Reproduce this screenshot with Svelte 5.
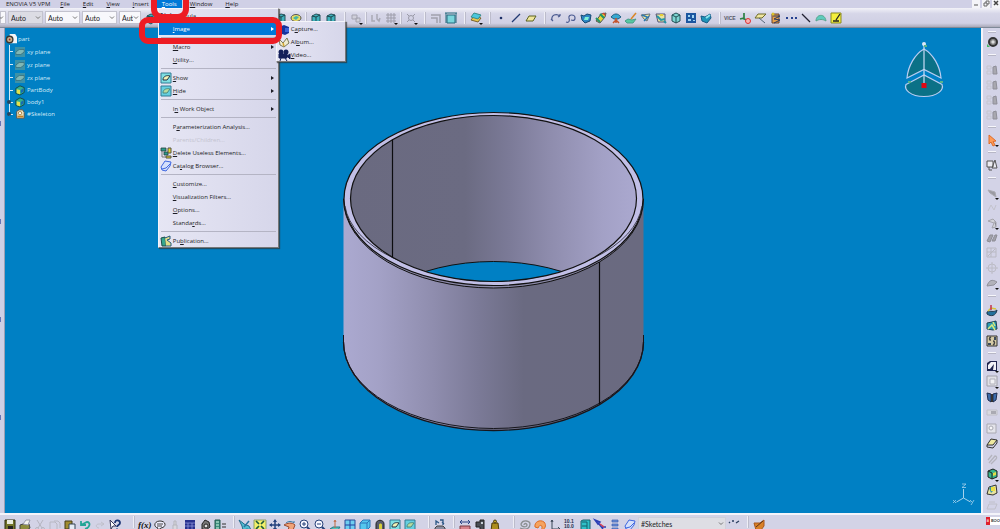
<script>
  const glyphs = {
    cube: '<path d="M2 4l4-2 4 1v6l-4 3-4-2z" fill="#3fb3bd" stroke="#24505a"/><path d="M2 4l4 1 4-2M6 5v6" fill="none" stroke="#1c444c"/>',
    cubeGreen: '<path d="M1 4l5-3 5 2v6l-5 3-5-2z" fill="#35b08c" stroke="#143c3c"/><path d="M2 5l4 1v5l-4-1z" fill="#e5e04c"/><path d="M7 6l3-2v4l-3 2z" fill="#1769b5"/>',
    disc: '<ellipse cx="6" cy="6" rx="5" ry="3.5" fill="#e8dc62" stroke="#555"/><path d="M3 6l3-2 3 1-3 3z" fill="#42b5a8"/>',
    surf: '<path d="M1 4l6-3 4 2-2 7-7 1z" fill="#39b6cf" stroke="#175a8c"/><path d="M2 8l4-4 4 1" fill="none" stroke="#e3ec4e" stroke-width="1.5"/>',
    surf2: '<path d="M1 3l3 1 3-2 4 1-1 6-5 2-3-3z" fill="#2c86c4" stroke="#174a73"/><path d="M4 8l1-3 4 0-1 3z" fill="#7ff0d5"/>',
    sweep: '<path d="M1 9l5-7 5-1-1 4-5 6z" fill="#e6d63a" stroke="#555"/><path d="M1 6l4 4M5 2l4 4" stroke="#22936b" stroke-width="2"/><path d="M8 1l2 2" stroke="#d8452c" stroke-width="1.5"/>',
    fan: '<path d="M1 5c3-4 7-4 10 0L8 7H4z" fill="#38a9d0" stroke="#1f5f83"/><path d="M6 6v5M3 11l3-3 3 3" fill="none" stroke="#c5542c" stroke-width="1.5"/>',
    extrude: '<path d="M0 9l3-2 4 1 4-1-3 4H2z" fill="#57c9a2" stroke="#4a9d8b"/><path d="M6 7l5-6" stroke="#d98728" stroke-width="1.5"/>',
    trim: '<path d="M1 3l9-1-3 7-3-2z" fill="#f1e79e" stroke="#66747f"/><path d="M2 3l5 2M4 9l5-5" stroke="#2c79b0" stroke-width="1.5"/>',
    trim2: '<path d="M1 2h9v8H3z" fill="#e8e3a0" stroke="#557"/><path d="M2 4l4 4 4-1M9 9l2 2" fill="none" stroke="#2695a6" stroke-width="2"/><path d="M5 2h3v2H5z" fill="#e5cc38"/>',
    box: '<path d="M2 3l4-2 4 2v6l-4 2-4-2z" fill="#7cd5d2" stroke="#234f55"/><path d="M2 3l4 2 4-2M6 5v6" fill="none" stroke="#234f55"/>',
    tiles: '<path d="M1 1h10v10H1z" fill="#1c56a0"/><path d="M3 3h2v2H3zM7 3h2v3H7zM3 7h3v2H3zM8 8h2v1H8z" fill="#9fd3f3"/>',
    solid: '<path d="M1 4l4 1 5-3 1 4-4 5-5-2z" fill="#1f94b8" stroke="#155a86"/><path d="M6 6l4-3" stroke="#8ee5ee" stroke-width="2"/>',
    layers: '<path d="M1 8l7 2 3-4-7-2z" fill="#e8c84e" stroke="#7a6330"/><path d="M1 5l7 2 3-4-7-2z" fill="#4ac7dd" stroke="#3a8c8a"/>',
    dot: '<circle cx="6" cy="6" r="1.3" fill="#1d2f66"/>',
    line: '<path d="M2 10l8-8" stroke="#223a73" stroke-width="1.3"/>',
    back: '<path d="M2 2l8 8" stroke="#223" stroke-width="1.3"/>',
    plane: '<path d="M1 9l3-5h7L8 9z" fill="#efe59a" stroke="#5b6220"/>',
    curve: '<path d="M1 7l2 2M2 8c-1-5 4-7 8-4M10 4l-2 1M10 4V2" fill="none" stroke="#4a5a90" stroke-width="1.2"/>',
    spiral: '<path d="M1 10c3 1 4-1 3-4-1-4 6-4 6 0 0 2-1 3-4 2" fill="none" stroke="#4a5a90" stroke-width="1.2"/>',
    gbox: '<path d="M2 3h5v4H2zM6 6h4v4H6z" fill="#cfcfda" stroke="#a3a3b0"/>',
    gswap: '<path d="M2 3v6h3M7 2v5l2 2 1-3" fill="none" stroke="#a9a9b5" stroke-width="1.5"/>',
    grid: '<path d="M3 1v10M6 1v10M9 1v10M1 3h10M1 6h10M1 9h10" stroke="#9d9daa"/>',
    gstar: '<circle cx="6" cy="6" r="2.5" fill="none" stroke="#9a9aa8"/><path d="M2 2l2 2M10 2L8 4M2 10l2-2M10 10L8 8" stroke="#9a9aa8"/>',
    gcorner: '<path d="M1 3h9v8M1 6h6v5" fill="none" stroke="#a1a1ad" stroke-width="1.5"/>',
    frame: '<path d="M0 1h12M1 1v10M11 1v10" fill="none" stroke="#24697d"/><path d="M2 3h8v8H2z" fill="#79d5dc" stroke="#24697d"/>',
    axisNo: '<path d="M4 1v6l6 2M4 6l-4 1" fill="none" stroke="#2d8144" stroke-width="1.7"/><circle cx="8" cy="9" r="2.5" fill="#f7b3b3" stroke="#d33"/>',
    sheet: '<path d="M0 6l3-4h8L7 6z" fill="#f0e6a0" stroke="#6c6a2b"/><path d="M4 6l6 5" stroke="#567"/>',
    clip: '<path d="M2 2h7v9H2z" fill="#e6a24a" stroke="#643"/><path d="M3 4l7 0-6 3 6 1-6 3" fill="none" stroke="#2b3a62"/><circle cx="3" cy="2" r="1.5" fill="#d9c32e"/>',
    dots: '<path d="M1 5h2v2H1zM6 5h2v2H6zM10 5h2v2h-2z" fill="#24408f"/>',
    arc: '<path d="M1 9c0-7 9-8 10 0-3-2-7-2-10 0z" fill="#5ecbbd" stroke="#59a58f"/>',
    note: '<path d="M1 1h10v10H1z" fill="#f4ee3c" stroke="#8a8a22"/><path d="M3 9h6M6 8l4-6" stroke="#222" stroke-width="1.3"/>',
    save: '<path d="M1 1h10v10H1z" fill="#73752a" stroke="#2c2d10"/><path d="M3 1h6v4H3z" fill="#e9ecdf"/><path d="M4 7h5v4H4z" fill="#222"/>',
    print: '<path d="M1 6l3-1h6l1 4-3 2H1z" fill="#8d8c3d" stroke="#444"/><path d="M4 5l3-4h4L9 6z" fill="#f4f4f0" stroke="#99a"/>',
    cut: '<path d="M3 1l5 8M9 1L4 9" stroke="#b5b5c0"/><circle cx="3" cy="10" r="1.5" fill="none" stroke="#b5b5c0"/><circle cx="9" cy="10" r="1.5" fill="none" stroke="#b5b5c0"/>',
    gcopy: '<path d="M1 3h5l2 2v6H1zM5 2h4l2 2v5" fill="none" stroke="#b8b8c2"/>',
    paste: '<path d="M1 2h7v8H1z" fill="#a08c2f" stroke="#443d17"/><path d="M5 5h6v6H5z" fill="#e5ecf5" stroke="#345"/>',
    undo: '<path d="M2 6l6-3c4 0 3 6-2 7M2 2v4h5" fill="none" stroke="#23a596" stroke-width="1.8"/>',
    gredo: '<path d="M10 5H5C1 5 2 9 5 9M7 3l3 2-3 2" fill="none" stroke="#c0c0cb"/>',
    help: '<path d="M1 1l1 9 2-3h3z" fill="#fff" stroke="#335"/><path d="M6 4c0-4 5-3 5 0 0 2-3 2-3 4M8 9.5v2" fill="none" stroke="#1b3475" stroke-width="1.8"/>',
    fx: '<text x="-1" y="9" font-family="Liberation Serif, serif" font-size="9" font-style="italic" font-weight="700" fill="#111">f(x)</text>',
    bubble: '<path d="M4 9L3 12l4-3c6-1 5-7-1-7S-1 8 4 9z" fill="#eef" stroke="#333"/><path d="M3 5h6M3 7h5" stroke="#444"/>',
    glock: '<path d="M4 6h4v5H4zM5 6V2h2v4" fill="#d8d8df" stroke="#b5b5bd"/>',
    table: '<path d="M1 1h10v10H1z" fill="#27318e"/><path d="M1 4h10M1 7h10M4 4v7M8 4v7" stroke="#98a2e2" stroke-width=".7"/>',
    ring: '<path d="M3 5l3-4 4 2 1 5-4 3-4-1z" fill="#777" stroke="#222"/><circle cx="7" cy="7" r="2" fill="#ddd" stroke="#222"/>',
    tree: '<path d="M1 1h5v10H1z" fill="#3d9080" stroke="#25594f"/><path d="M2 3h3M2 6h3M2 9h3" stroke="#d2f5e1"/><path d="M8 5h4M8 8h4" stroke="#333"/>',
    plane3: '<path d="M0 1l4 3 1 1 5 2 2 4-4-1-4 1-1-4z" fill="#51bdd0" stroke="#256a8c"/><path d="M10 2L5 8" stroke="#2a75a0" stroke-width="1.5"/>',
    fit: '<path d="M0 1h12v10H0z" fill="#f3f06a" stroke="#8fa06c"/><path d="M2 2l3 3M10 2L7 5M2 10l3-3M10 10L7 7" stroke="#1c5a3a" stroke-width="1.7"/>',
    pan: '<path d="M6 1v10M1 6h10" stroke="#26437e" stroke-width="1.5"/><path d="M6 0l2 3H4zM6 12l2-3H4zM0 6l3-2v4zM12 6L9 4v4z" fill="#26437e"/>',
    rotate: '<path d="M0 6c3-2 8-3 11 0l-2 5H4l1-3z" fill="#f0a478" stroke="#9a4a31"/><path d="M2 4c2-2 6-2 8 0V2" stroke="#3878a5" fill="none"/>',
    zin: '<circle cx="5" cy="5" r="4" fill="#f6f6ff" stroke="#27427a"/><path d="M3 5h4M5 3v4" stroke="#27427a"/><path d="M8 8l3 3" stroke="#27427a" stroke-width="2"/>',
    zout: '<circle cx="5" cy="5" r="4" fill="#f6f6ff" stroke="#27427a"/><path d="M3 5h4" stroke="#27427a"/><path d="M8 8l3 3" stroke="#27427a" stroke-width="2"/>',
    normal: '<path d="M1 10l3-2h7l-2 3z" fill="#58c5bb" stroke="#257989"/><path d="M6 9V2M5 3l1-2 1 2" fill="none" stroke="#c26a43"/>',
    four: '<path d="M1 1h10v10H1z" fill="#6ecff0" stroke="#2a4d9a"/><path d="M6 1v10M1 6h10" stroke="#2341a0"/>',
    iso: '<path d="M1 4l3-3h7v7l-3 3H1z" fill="#54c7ee" stroke="#2b75b9"/><path d="M1 4h7v7M8 4l3-3" fill="none" stroke="#2b75b9"/>',
    arch: '<path d="M2 11V5c0-5 8-5 8 0v6z" fill="#555a6b" stroke="#222"/><path d="M5 11V6c0-2 3-2 3 0v5z" fill="#d7ce3a"/>',
    show: '<path d="M1 1h10v10H1z" fill="#7fdfe2" stroke="#337b94"/><path d="M3 8c0-4 4-5 7-4L7 8z" fill="#f3f3b5" stroke="#234"/>',
    hide: '<path d="M1 1h10v10H1z" fill="#65cfe0" stroke="#337b94"/><path d="M3 8c0-4 4-5 7-4L7 8z" fill="#b8db9f" stroke="#4a8a80"/>',
    robot: '<path d="M1 9l2-2h6l2 2v3H1z" fill="#888ca0" stroke="#444"/><path d="M2 6V2l3 2M9 6V1H6M8 3l2 2" fill="none" stroke="#2b5786" stroke-width="1.3"/>',
    measure: '<path d="M1 3h10M3 1L1 3l2 2M9 1l2 2-2 2" fill="none" stroke="#2a4384"/><path d="M1 7h10v4H1z" fill="#d7828b" stroke="#793b44"/>',
    caliper: '<path d="M2 3h4V1h4v10H6V8H2z" fill="#4a4e55" stroke="#222"/><path d="M7 3h2v2H7z" fill="#c8d0d6"/>',
    weight: '<path d="M3 4h6l1 8H2z" fill="#ad8d1d" stroke="#4c3c0a"/><circle cx="6" cy="2.5" r="1.5" fill="#c2a52a" stroke="#4c3c0a"/>',
    coil: '<path d="M1 9c8 3 10-1 10-4S4 0 2 5c0 3 6 4 6 1 0-2-3-2-3 0" fill="none" stroke="#8b8f91" stroke-width="1.3"/>',
    flame: '<path d="M1 8c-1-5 5-8 9-5 3 3 1 8-3 8 3-4-1-7-3-2z" fill="#f6a35e" stroke="#dd6b24"/>',
    axes: '<path d="M3 1v9h8M2 3l1-2 1 2M3 10L1 12M9 8l2 2-2 2" fill="none" stroke="#3a4656"/>',
    num: '<text x="0" y="4" font-family="Liberation Sans, sans-serif" font-size="5" font-weight="700" fill="#26304d">10.1</text><text x="0" y="9" font-family="Liberation Sans, sans-serif" font-size="5" font-weight="700" fill="#26304d">10.0</text>',
    column: '<path d="M2 2l2-1h7v9l-2 2H2z" fill="#2fc0c8" stroke="#17616c"/><path d="M3 3h5v8M3 7h5" fill="none" stroke="#17616c"/>',
    link: '<path d="M1 1l3 4 2-2zM5 5l4 5M8 8h4" stroke="#2c3fb5" stroke-width="1.5" fill="#4c6ae0"/><path d="M6 5l4 3" stroke="#d33b53" stroke-width="1.5"/>',
    stack: '<path d="M3 1h6v2H3zM3 5h6v2H3zM3 9h6v2H3z" fill="#6b8ed8" stroke="#3c5faf" stroke-width=".7"/>',
    book: '<path d="M1 7l4-6 6 1-1 4-4 5-4-1z" fill="#d5e0fb" stroke="#3d66e0"/><path d="M2 9l4-1 4-4" fill="none" stroke="#3d66e0"/>',
    marks: '<path d="M1 3l1 1M4 2h2M8 4l3-2" stroke="#2a3f60" stroke-width="1.3"/>',
    brush: '<path d="M1 4h6l4-3v6l-3 4H3z" fill="#d98026" stroke="#a8571d"/><path d="M3 8l7-6" stroke="#5b3215"/>',
    gear: '<circle cx="7" cy="6" r="4" fill="#8a8a8a" stroke="#333" stroke-width="2"/><path d="M5 6l2-2 2 2-2 2z" fill="#ddd"/><path d="M1 8l3 3H1z" fill="#46b966"/>',
    gview: '<path d="M1 2h4v3H1zM1 7h4v3H1z" fill="none" stroke="#c5c5ce"/><path d="M7 3l3-1 1 8H7z" fill="#a8a8b0" stroke="#8f8f99"/>',
    pointer: '<path d="M3 1l7 6-3 .5 2 3.5-2 1-2-4-2 2z" fill="#ff9a55" stroke="#dc6c2b"/>',
    sketch: '<path d="M1 2h6v6H1zM6 9l3-8 2 8z" fill="#ececf2" stroke="#555"/><path d="M3 8v3h3" fill="none" stroke="#555"/>',
    gsheet: '<path d="M2 3l7 2 1 5-6-4z" fill="#9a9aa2" stroke="#aaaab2"/>',
    gline: '<path d="M2 9l3-6 3 5 2-5" fill="none" stroke="#c3c3cc"/>',
    gbend: '<path d="M2 4l5-2 3 3v5l-4 1 2-5z" fill="#d2d2d8" stroke="#a5a5ad"/><path d="M8 4l2 2v4z" fill="#8c8c94"/>',
    gslant: '<path d="M1 9l3-6 3 0-3 7zM6 9l3-6 2 0-2 6z" fill="#a2a2aa" stroke="#8d8d96"/>',
    gmesh: '<path d="M1 1h9v9H1zM1 5h9M5 1v9M2 9l7-7" fill="none" stroke="#b9b9c3"/>',
    gtarget: '<circle cx="6" cy="6" r="4" fill="none" stroke="#bcbcc6"/><path d="M6 0v12M0 6h12" stroke="#bcbcc6"/>',
    gwave: '<path d="M1 9c2-6 5-7 10-4L8 8z" fill="#b2b2ba" stroke="#90909a"/>',
    boat: '<path d="M1 7c4-2 6 1 10-2-1 6-6 7-10 4z" fill="#21709c" stroke="#223a50"/><path d="M2 6l3-3 5 1" stroke="#d5c43c" stroke-width="1.3" fill="none"/><path d="M5 0v5" stroke="#c3334d" stroke-width="1.5"/>',
    patch: '<path d="M1 3l5-1 4-1 1 8-4 1-6-1z" fill="#2c9bb3" stroke="#1c3f53"/><path d="M2 9l4-4 3 5M7 2l2 4" fill="none" stroke="#d6ea7d" stroke-width="1.5"/>',
    pockets: '<path d="M1 1h10v10H1z" fill="#d6cba6" stroke="#333"/><path d="M5 2C3 3 3 5 5 5M7 10c2-1 2-4 0-4" fill="none" stroke="#444" stroke-width="1.5"/><path d="M8 2h2v3H8zM2 8h3v2H2z" fill="#3c4a5a"/>',
    pad: '<path d="M1 3l3-2h7v10H1z" fill="#20244e"/><path d="M2 5l3-3h5v8l-3 0 1-6-4 5H2z" fill="#f2f2f7"/>',
    gframe: '<path d="M1 1h10v10H1z" fill="#e0e0e6" stroke="#a0a0aa"/><path d="M4 4h5v5H4z" fill="#f1f1f4" stroke="#b0b0ba"/>',
    shaft: '<path d="M1 2l4 1v8l-3-2zM11 2L7 3v8l3-2z" fill="#3c6cab" stroke="#1d2d52"/><path d="M5 3h2v8H5z" fill="#333"/>',
    gbar: '<path d="M1 4h10v5H1z" fill="#d9d9e0" stroke="#bfbfc8"/><path d="M5 5h5v3H5z" fill="#aaaab3"/>',
    ground: '<path d="M1 2h9v9H1z" fill="#e3e3ea" stroke="#a9a9b2"/><circle cx="5" cy="6" r="2" fill="#f7f7f9" stroke="#a9a9b2"/>',
    slab: '<path d="M1 8l4-6 6 1-4 5z" fill="#efe9a0" stroke="#333"/><path d="M1 8v2l6 1 4-5V3" fill="none" stroke="#333"/>',
    gclip: '<path d="M3 10l6-7c2 0 2 2 1 3l-5 5M2 7l4-5" fill="none" stroke="#b4b4bd" stroke-width="1.3"/>',
    gem: '<path d="M2 3l5-2 4 2v6l-5 2-4-2z" fill="#37b58c" stroke="#222"/><path d="M2 3l4 2v6" stroke="#222" fill="none"/><path d="M7 5l3-1v3l-3 1z" fill="#e4dc45"/>',
    split: '<path d="M1 10l2-7 7-2 1 8-4 2z" fill="#e7e3a0" stroke="#333"/><path d="M3 4l3-2 3 3-4 4z" fill="#3d95a3"/><path d="M5 3h4v4H5z" fill="#ecdf42"/>',
    grow: '<path d="M1 10l2-5h8l-2 5zM3 3h6" fill="none" stroke="#c0c0ca"/>',
    capture: '<path d="M1 4l5-2 5 2v6l-4 2-6-2z" fill="#16339c"/><path d="M7 5h4v4H7z" fill="#3a62d8"/>',
    album: '<path d="M1 3l4 4 4-5 2 5-5 4-4-2z" fill="#f0edcf" stroke="#7b7a55"/><path d="M5 7l1 3" stroke="#d3a52d" stroke-width="1.5"/>',
    video: '<circle cx="3" cy="3" r="2.5" fill="#131f5a"/><circle cx="8" cy="3" r="2.5" fill="#131f5a"/><path d="M1 5h8v4H1zM9 7l3-2v5zM3 9l-1 3M7 9l2 3" fill="#131f5a" stroke="#131f5a"/>',
    useless: '<path d="M1 1h5v3H1zM4 5h4v3H4z" fill="#2d9b8b" stroke="#24413e" stroke-width=".8"/><path d="M8 1h3v5H8zM6 9h5v2H6z" fill="#e7d52c" stroke="#554"/><path d="M2 4v6h4" fill="none" stroke="#777"/>',
    publish: '<path d="M1 3l4-1 1 9-4 0z" fill="#35a88e" stroke="#1d4d49"/><path d="M5 3l5-2v3l-3 1 4 3v3H6" fill="#dfdf8a" stroke="#275b7c"/>',
    part: '<path d="M4 0h6l2 3v7H4z" fill="#f4f6f7"/><circle cx="4" cy="6" r="3.5" fill="#c7b48f" stroke="#3d3732" stroke-width="1.5"/><circle cx="4" cy="6" r="1" fill="#a22"/>',
    planeDatum: '<path d="M0 0h12v12H0z" fill="#3d92a8"/><path d="M1 6l4-3h6v3L7 9H1z" fill="#7fb7b5" stroke="#3b727d"/>',
    skeleton: '<path d="M2 3l3-2h4l2 3v7H2z" fill="#e8e0bd" stroke="#5a4a3d"/><circle cx="6" cy="5" r="2" fill="#fff" stroke="#a4762d"/><path d="M3 9h7" stroke="#c7801f" stroke-width="2"/>',
    vice: '<text x="-1" y="8" font-family="Liberation Sans, sans-serif" font-size="5" font-weight="700" fill="#556">VICE</text>'
  };

  const top = [
    'cube', 'surf', 'plane', 'box', 'trim', 'solid', 'layers', 'sweep', '||', 'cube', 'disc', '|', 'cube', 'cube', '||',
    'gbox*', '|', 'gswap', 'grid*', '|', 'gstar*', '||', 'gcorner', 'frame', '||', 'layers*', '||',
    'dot', 'line', 'plane', '||', 'curve', 'spiral', 'surf2', 'sweep', 'fan', 'extrude', 'trim', 'trim2', 'box', 'tiles', 'solid',
    '||', 'vice', 'axisNo', 'sheet', 'clip', 'dots', 'back', 'arc', 'note'
  ];
  const bottom = [
    'save', 'print', 'cut', 'gcopy', 'paste', 'undo', 'gredo', 'help', '|||', 'fx', 'bubble', 'glock', 'table', 'ring', 'tree', '||',
    'plane3', 'fit', 'pan', 'rotate', 'zin', 'zout', 'normal', 'four', 'iso', 'arch', 'show', 'hide', '|||', 'robot', '||',
    'measure', 'caliper', 'weight', '|||', 'coil', 'flame', 'axes', 'num', 'column', 'link', 'stack', 'book'
  ];
  const bottomEnd = ['marks', '||', 'brush'];
  const side = [
    '-', 'gear', '---', 'gview', 'gview', 'gview', 'gview', '--', 'pointer*', '--', 'sketch', '---',
    'gsheet*', 'gline', 'gbend*', 'gslant', 'gmesh', 'gtarget', 'gwave*', '---', 'boat', 'patch', 'pockets', '--'
  ];
  const sideEnd = ['pad*', 'gframe*', 'shaft', 'gbar', 'ground', 'slab', 'gclip', 'gem*', 'split', 'grow'];

  // An underscore marks the access key of the label.
  const menus = ['_File', '_Edit', '_View', '_Insert', '_Tools', '_Window', '_Help'];
  const toolsMenu = [
    { t: '_Formula...', i: 'fx' },
    { t: '_Image', sub: true, on: true },
    null,
    { t: '_Macro', sub: true },
    { t: '_Utility...' },
    null,
    { t: '_Show', i: 'show', sub: true },
    { t: '_Hide', i: 'hide', sub: true },
    null,
    { t: 'I_n Work Object', sub: true },
    null,
    { t: 'P_arameterization Analysis...' },
    { t: 'Parents/Children...', off: true },
    { t: '_Delete Useless Elements...', i: 'useless' },
    { t: 'Ca_talog Browser...', i: 'book' },
    null,
    { t: '_Customize...' },
    { t: '_Visualization Filters...' },
    { t: '_Options...' },
    { t: 'Standa_rds...' },
    null,
    { t: 'Pu_blication...', i: 'publish' }
  ];
  const imageMenu = [
    { t: 'C_apture...', i: 'capture' },
    { t: 'Al_bum...', i: 'album' },
    { t: '_Video...', i: 'video' }
  ];
  const treeItems = [
    { t: 'xy plane', i: 'planeDatum', datum: true },
    { t: 'yz plane', i: 'planeDatum', datum: true },
    { t: 'zx plane', i: 'planeDatum', datum: true },
    { t: 'PartBody', i: 'cubeGreen' },
    { t: 'body1', i: 'cubeGreen', knob: true },
    { t: '#Skeleton', i: 'skeleton', knob: true }
  ];
  const combos = ['Color', 'Transparency', 'Line weight', 'Line type'];
</script>

{#snippet icon(name)}
  <svg class="icon" viewBox="0 0 12 12" aria-hidden="true">{@html glyphs[name]}</svg>
{/snippet}

{#snippet chevron()}
  <svg class="chevron" viewBox="0 0 6 4" aria-hidden="true"><path d="M1 .5l2 2 2-2" fill="none" stroke="#777" /></svg>
{/snippet}

{#snippet label(text)}
  {@const k = text.indexOf('_')}
  {#if k < 0}<span>{text}</span>{:else}<span>{text.slice(0, k)}<u>{text[k + 1]}</u>{text.slice(k + 2)}</span>{/if}
{/snippet}

{#snippet tools(list)}
  {#each list as name}
    {#if name[0] === '|' || name[0] === '-'}
      <span class={['sep', { s1: name.length === 1, s2: name.length === 2, s3: name.length === 3 }]}></span>
    {:else}
      {@const key = name.replace('*', '')}
      <button class="tool" aria-label={key}>
        {@render icon(key)}
        {#if name.endsWith('*')}<i class="more"></i>{/if}
      </button>
    {/if}
  {/each}
{/snippet}

{#snippet entry(m)}
  <button class={['entry', { on: m.on, off: m.off }]} disabled={m.off}>
    <span class="slot">{#if m.i}{@render icon(m.i)}{/if}</span>
    {@render label(m.t)}
    {#if m.sub}<i class="arrow"></i>{/if}
  </button>
{/snippet}

<div class="app">
  <header class="menubar">
    <span class="brand">ENOVIA V5 VPM</span>
    <nav>
      {#each menus as m}
        <div class="menu-host">
          <button class={['menu', { open: m === '_Tools' }]}>{@render label(m)}</button>
          {#if m === '_Tools'}
            <div class="popup main">
              {#each toolsMenu as e}
                {#if e?.on}
                  <div class="sub-host">
                    {@render entry(e)}
                    <div class="popup sub">
                      {#each imageMenu as s}{@render entry(s)}{/each}
                    </div>
                  </div>
                {:else if e}
                  {@render entry(e)}
                {:else}
                  <div class="rule"></div>
                {/if}
              {/each}
            </div>
            <div class="ring ring-tools"></div>
            <div class="ring ring-image"></div>
          {/if}
        </div>
      {/each}
    </nav>
    <div class="window-buttons">
      <button aria-label="Minimize"><svg viewBox="0 0 8 8"><path d="M2 5h4" stroke="#555" /></svg></button>
      <button aria-label="Restore"><svg viewBox="0 0 8 8"><path d="M2 3h3v3H2zM4 3V1h3v3H5" fill="none" stroke="#666" /></svg></button>
      <button aria-label="Close"><svg viewBox="0 0 8 8"><path d="M2 1l4 4M6 1L2 5" stroke="#444" stroke-width="1.5" /></svg></button>
    </div>
  </header>

  <div class="toolbar">
    <div class="combos">
      <span class="combo-end">{@render chevron()}</span>
      {#each combos as c, n}
        <label class={['combo', { dim: n === 0, short: n === 3 }]}>
          <select aria-label={c}><option>Auto</option></select>
          {@render chevron()}
        </label>
      {/each}
    </div>
    {@render tools(top)}
  </div>

  <main>
    <aside class="left-rail"><i></i><i></i><i></i><i></i></aside>
    <section class="viewport">
      <div class="tree">
        <div class="root">{@render icon('part')}<span>part</span></div>
        <ul>
          {#each treeItems as t}
            <li class={{ datum: t.datum, knob: t.knob }}>{@render icon(t.i)}<span>{t.t}</span></li>
          {/each}
        </ul>
      </div>

      <svg class="model" viewBox="335 104 316 333" role="img" aria-label="Ring part">
        <defs>
          <linearGradient id="outer">
            <stop offset="0" stop-color="#aba9d0" /><stop offset=".12" stop-color="#a3a1c6" />
            <stop offset=".3" stop-color="#8f8dae" /><stop offset=".45" stop-color="#7b7a97" />
            <stop offset=".6" stop-color="#6a6a81" /><stop offset="1" stop-color="#6a6a80" />
          </linearGradient>
          <linearGradient id="inner">
            <stop offset="0" stop-color="#6a6a80" /><stop offset=".4" stop-color="#6b6b82" />
            <stop offset=".55" stop-color="#7b7a97" /><stop offset=".7" stop-color="#8f8dae" />
            <stop offset=".88" stop-color="#a3a1c6" /><stop offset="1" stop-color="#aba9d0" />
          </linearGradient>
          <clipPath id="bore"><ellipse cx="493.5" cy="198.5" rx="143" ry="83" /></clipPath>
        </defs>
        <path d="M343.5 199V344a150 86.5 0 0 0 300 0V199z" fill="url(#outer)" />
        <path d="M343.5 335v7a150 86.5 0 0 0 300 0v-7" fill="none" stroke="#16161c" />
        <path d="M343.5 342a150 88.5 0 0 0 300 0" fill="none" stroke="#16161c" stroke-width="1.3" />
        <path d="M599.5 259V404" stroke="#0c0c10" stroke-width="1.2" />
        <path d="M343.5 199a150 89 0 0 0 300 0z" fill="#8b89a8" stroke="#111" />
        <ellipse cx="493.5" cy="199" rx="149.5" ry="86.5" fill="#c1bfe6" stroke="#111" stroke-width="1.2" />
        <path d="M345 206a149 79 0 0 0 297 0" fill="none" stroke="#26262e" stroke-width=".8" />
        <g clip-path="url(#bore)">
          <path d="M350 114h288v170H350z" fill="url(#inner)" />
          <path d="M392.5 120V280" stroke="#0c0c10" stroke-width="1.2" />
          <ellipse cx="493.5" cy="344.5" rx="143" ry="83" fill="#0080c4" stroke="#111" />
        </g>
        <ellipse cx="493.5" cy="198.5" rx="143" ry="83" fill="none" stroke="#111" stroke-width="1.2" />
      </svg>

      <svg class="compass" viewBox="900 38 48 64" aria-hidden="true">
        <path d="M924 49c-9 5-16 17-17 29l17-8.5L941 78c-1-12-8-24-17-29z" fill="#0b7187" stroke="#b9cdf2" stroke-width="1.2" />
        <path d="M906 84.5L924 75l18 9.500c2 5-4 12-18 12s-20-7-18-12z" fill="#0b7187" stroke="#b9cdf2" stroke-width="1.2" />
        <path d="M924 44v40" stroke="#c9dcf5" stroke-width="1.2" />
        <circle cx="924" cy="44" r="2" fill="#dce9f7" />
        <path d="M924 46h3M908 82h3M940 82h3" fill="none" stroke="#59b48a" stroke-width="2" />
        <path d="M921.5 83h5v5h-5z" fill="#e00814" />
      </svg>

      <svg class="axis" viewBox="950 482 28 26" aria-hidden="true">
        <path d="M963.5 499V490M963.5 499l-7 4M963.5 499l7 4" stroke="#a5d2ec" fill="none" />
        <path d="M962 485h4l-4 3.5h4M953 501l3 3M956 501l-3 3M970 501l2 2M974 501l-3 5" stroke="#a5d2ec" fill="none" stroke-width=".8" />
      </svg>
    </section>
    <aside class="side">
      {@render tools(side)}
      <div class="side-end">{@render tools(sideEnd)}</div>
    </aside>
  </main>

  <footer class="toolbar status">
    {@render tools(bottom)}
    <label class="combo wide">
      <select aria-label="Work object"><option>#Sketches</option></select>
      {@render chevron()}
    </label>
    {@render tools(bottomEnd)}
    <span class="badge"><b>ii</b>BOO</span>
  </footer>
</div>

<style>
  :global(body) {
    margin: 0;
  }
  .app {
    display: flex;
    flex-direction: column;
    height: 100vh;
    overflow: hidden;
    background: #d3d3e7;
    color: #1c1c24;
    font: 7px/8px Lato, 'Open Sans', sans-serif;
  }
  button,
  select {
    margin: 0;
    padding: 0;
    border: 0;
    background: none;
    color: inherit;
    font: inherit;
  }
  u {
    text-underline-offset: 1px;
  }
  .icon {
    display: block;
    flex: none;
    width: 12px;
    height: 12px;
    overflow: visible;
  }

  .menubar {
    display: flex;
    height: 8px;
    padding-left: 6px;
    background: #d0d0e6;
    font: 6px/8px 'Open Sans', 'Noto Sans', sans-serif;
  }
  .menubar nav {
    display: flex;
    flex: 1;
    gap: 1px;
  }
  .brand {
    margin-right: 4px;
    white-space: nowrap;
  }
  .menu-host,
  .sub-host {
    position: relative;
  }
  .menu {
    display: block;
    padding: 0 6px;
  }
  .menu.open {
    padding: 0 5px;
    margin: 0 1px;
    background: #0078d7;
    color: #fff;
  }
  .window-buttons {
    display: flex;
    gap: 2px;
  }
  .window-buttons button {
    width: 8px;
    height: 8px;
    background: #f4f4f8;
  }
  .window-buttons svg {
    display: block;
  }

  .popup {
    position: absolute;
    z-index: 2;
    border: 1px solid #f4f4fa;
    border-right-color: #777;
    border-bottom-color: #777;
    background: linear-gradient(90deg, #e6e6f4, #d6d6ea);
    box-shadow: 1px 1px 1px #333a;
  }
  .popup.main {
    top: 8px;
    left: 2px;
    width: 119px;
  }
  .popup.sub {
    top: -1px;
    left: 117px;
    width: 68px;
  }
  .entry {
    display: flex;
    align-items: center;
    width: 100%;
    height: 13px;
    padding-right: 4px;
    text-align: left;
    white-space: nowrap;
  }
  .entry.on {
    background: #0078d7;
    color: #fff;
  }
  .entry.off {
    color: #c3c3cf;
  }
  .slot {
    width: 12px;
    margin: 0 1px;
  }
  .arrow {
    margin-left: auto;
    border: 2px solid transparent;
    border-left: 3px solid currentColor;
    border-right: 0;
  }
  .rule {
    height: 2px;
    margin: 0 2px 2px;
    border-bottom: 1px solid #b4b4c4;
  }
  .ring {
    position: absolute;
    z-index: 3;
    box-sizing: border-box;
    border: 6px solid #ed1c24;
    pointer-events: none;
  }
  .ring-tools {
    top: -14px;
    left: -5px;
    width: 38px;
    height: 34px;
    border-radius: 11px;
  }
  .ring-image {
    top: 17px;
    left: -17px;
    width: 143px;
    height: 27px;
    border-radius: 9px;
    z-index: 4;
  }

  .toolbar {
    display: flex;
    align-items: center;
    height: 19px;
    border-bottom: 1px solid #7f8998;
    background: linear-gradient(#f2f2f8, #d6d6e8 30%, #d0d0e4 80%, #a9a9b8);
  }
  .tool {
    position: relative;
    display: grid;
    flex: none;
    place-items: center;
    width: 15px;
    height: 15px;
  }
  .more {
    position: absolute;
    right: 0;
    bottom: 0;
    border: 2px solid transparent;
    border-top-color: #111;
    border-bottom: 0;
  }
  .sep {
    flex: none;
    box-sizing: border-box;
    height: 12px;
    border-left: 1px solid #eeeef6;
    background: linear-gradient(90deg, #bcbccb 1px, transparent 1px);
    background-clip: padding-box;
  }
  .s1 {
    width: 3px;
    margin-left: 2px;
  }
  .s2 {
    width: 4px;
    margin-left: 6px;
  }
  .s3 {
    width: 4px;
    margin-left: 11px;
  }
  .combos {
    display: flex;
    gap: 2px;
    margin-right: 2px;
  }
  .combo-end,
  .combo {
    position: relative;
    display: flex;
    align-items: center;
    box-sizing: border-box;
    width: 35px;
    height: 13px;
    border: 1px solid #c2c2ce;
    background: #f8f8fc;
  }
  .combo-end {
    width: 6px;
  }
  .combo.dim {
    background: #dcdce4;
  }
  .combo.short {
    width: 22px;
  }
  .combo select {
    width: 100%;
    padding: 0 7px 0 2px;
    appearance: none;
    text-overflow: clip;
  }
  .chevron {
    position: absolute;
    right: 1px;
    width: 6px;
    height: 4px;
  }

  main {
    display: flex;
    flex: 1;
    min-height: 0;
  }
  .left-rail {
    display: flex;
    flex-direction: column;
    justify-content: space-evenly;
    box-sizing: border-box;
    width: 5px;
    border-right: 1px solid #9b9fb4;
    background: #cfcfe4;
  }
  .left-rail i {
    width: 1px;
    height: 5px;
    background: #6674b4;
  }
  .viewport {
    position: relative;
    display: grid;
    flex: 1;
    place-items: center;
    min-width: 0;
    background: #0080c4;
    border-right: 2px solid #f4f4fa;
  }
  .model {
    width: 316px;
    height: 333px;
  }
  .compass {
    position: absolute;
    top: 10px;
    right: 33px;
    width: 48px;
    height: 64px;
  }
  .axis {
    position: absolute;
    right: 3px;
    bottom: 6px;
    width: 28px;
    height: 26px;
  }
  .tree {
    position: absolute;
    top: 5px;
    left: 1px;
    color: #d5ebf7;
    font-family: 'Open Sans', 'Noto Sans', sans-serif;
    font-size: 6px;
  }
  .root {
    display: flex;
    align-items: center;
    gap: 1px;
    height: 12px;
  }
  .root .icon {
    width: 11px;
    height: 11px;
  }
  .tree ul {
    margin: 0 0 0 3px;
    padding: 0;
    list-style: none;
    background: linear-gradient(#d5e9f5, #d5e9f5) 0 0 / 1px 71px no-repeat;
  }
  .tree li {
    position: relative;
    display: flex;
    align-items: center;
    gap: 2px;
    height: 12px;
  }
  .tree li.datum {
    height: 13px;
  }
  .tree li::before {
    content: '';
    width: 4px;
    height: 1px;
    background: #d5e9f5;
  }
  .tree li .icon {
    width: 10px;
    height: 10px;
  }
  .tree li.knob::after {
    content: '';
    position: absolute;
    left: -2px;
    width: 4px;
    height: 4px;
    border-radius: 2px;
    background: #23455f;
  }

  .side {
    display: flex;
    flex-direction: column;
    align-items: center;
    width: 17px;
    background: #d3d3e7;
  }
  .side .sep {
    width: 8px;
    height: 2px;
    border: 0;
    border-top: 1px solid #f6f6fb;
    background: #b7b7c6;
  }
  .side .s1 {
    margin: 3px 0 1px;
  }
  .side .s2 {
    margin: 4px 0;
  }
  .side .s3 {
    margin: 5px 0 6px;
  }
  .side-end {
    display: flex;
    flex: 1;
    flex-direction: column;
    justify-content: space-around;
  }

  .status {
    height: 14px;
    padding-left: 2px;
    border-top: 2px solid #f4f4fa;
    border-bottom: 0;
    background: #d3d3e6;
    align-items: flex-start;
  }
  .status .tool {
    margin-top: 2px;
  }
  .status .sep {
    margin-top: 1px;
  }
  .combo.wide {
    width: 88px;
    margin-top: 2px;
    margin-left: 1px;
    background: #dedee4;
    border-color: #d0d0da;
  }
  .badge {
    display: flex;
    gap: 1px;
    margin: 2px 0 0 auto;
    background: #fff;
    color: #333;
    font-size: 4px;
    font-weight: 700;
  }
  .badge b {
    padding: 0 1px;
    background: #e0202c;
    color: #fff;
  }
</style>
